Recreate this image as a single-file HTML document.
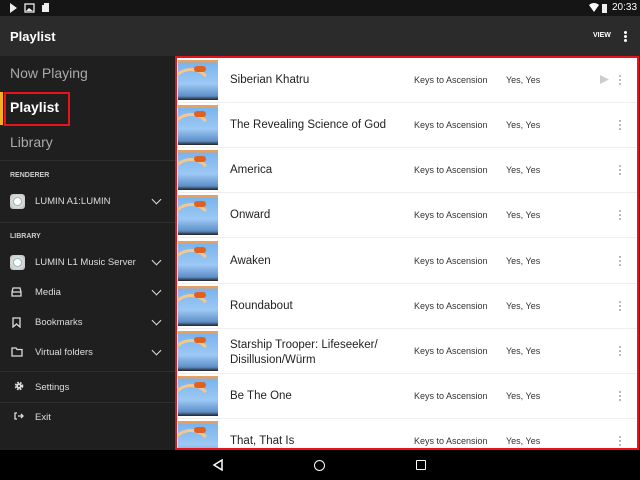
<!DOCTYPE html><html><head><style>
*{margin:0;padding:0;box-sizing:border-box}
body{width:640px;height:480px;overflow:hidden;background:#1f1f1f;font-family:"Liberation Sans",sans-serif;position:relative}
.sb{position:absolute;left:0;top:0;width:640px;height:16px;background:#151515;color:#fff;font-size:10px}
.tb{position:absolute;left:0;top:16px;width:640px;height:40px;background:#2b2b2b;color:#fff}
.side{position:absolute;left:0;top:56px;width:175px;height:394px;background:#1f1f1f}
.a{position:absolute;color:#ddd;font-size:9.5px}
.hdr{position:absolute;left:10px;font-size:7px;color:#ccc;font-weight:bold}
.sep{position:absolute;left:0;width:175px;height:1px;background:#2e2e2e}
.chev{position:absolute;left:153px;width:7px;height:7px;border-right:1.5px solid #ddd;border-bottom:1.5px solid #ddd;transform:rotate(45deg)}
.lum{position:absolute;left:10px;width:15px;height:15px;border-radius:3px;background:radial-gradient(circle,#fff 30%,#6aa 38%,#ddd 45%,#bbb 100%)}
.main{position:absolute;left:175px;top:56px;width:464px;height:394px;border:2px solid #e8141c;background:#fff;overflow:hidden}
.row{position:absolute;left:0;width:460px;height:45px;border-bottom:1px solid #eee}
.th{position:absolute;left:1px;top:2px;width:40px;height:40px;background:linear-gradient(180deg,#e8a060 0,#e8a060 2px,#7ab4ee 3px,#9cc8f4 60%,#5e8fc8 90%,#222 100%);overflow:hidden}
.th:before{content:"";position:absolute;left:-10px;top:8px;width:40px;height:44px;border-radius:50%;border:3px solid #f0c890;border-color:#f0c890 transparent transparent #e8b880}
.th:after{content:"";position:absolute;left:16px;top:6px;width:12px;height:6px;background:#e06020;border-radius:3px}
.t{position:absolute;left:53px;font-size:11.5px;color:#222}
.al{position:absolute;left:237px;font-size:9px;color:#333}
.ar{position:absolute;left:329px;font-size:9px;color:#333}
.dots{position:absolute;left:442px;width:2px;height:2px;background:#bbb;box-shadow:0 -4px #bbb,0 4px #bbb}
.nav{position:absolute;left:0;top:450px;width:640px;height:30px;background:#000}
</style></head><body>
<div class="sb">
<svg style="position:absolute;left:9px;top:3px" width="40" height="10"><path d="M1 0L8 5L1 10Z" fill="#eee"/><rect x="16" y="1" width="9" height="8" fill="none" stroke="#eee" stroke-width="1.3"/><path d="M17 8L20 5L24 8Z" fill="#eee"/><rect x="33" y="2" width="7" height="7" fill="#eee"/><rect x="35" y="0" width="5" height="2" fill="#eee"/></svg>
<svg style="position:absolute;left:589px;top:3px" width="18" height="10"><path d="M0 2Q5 -2 10 2L5 9Z" fill="#fff"/><rect x="13" y="1" width="5" height="9" fill="#eee"/></svg>
<span style="position:absolute;left:612px;top:2px;font-size:10px">20:33</span>
</div>
<div class="tb"><span style="position:absolute;left:10px;top:13px;font-size:13px;font-weight:bold">Playlist</span>
<span style="position:absolute;left:593px;top:16px;font-size:7px;font-weight:bold">VIEW</span>
<div style="position:absolute;left:624px;top:19px;width:3px;height:3px;background:#fff;box-shadow:0 -4px #fff,0 4px #fff;border-radius:50%"></div></div>
<div class="side">
<div style="position:absolute;left:10px;top:9px;font-size:14px;color:#aaa">Now Playing</div>
<div style="position:absolute;left:0;top:36px;width:3px;height:33px;background:#f3b21b"></div>
<div style="position:absolute;left:4px;top:36px;width:66px;height:34px;border:2px solid #e8141c"></div>
<div style="position:absolute;left:10px;top:43px;font-size:14px;color:#fff;font-weight:bold">Playlist</div>
<div style="position:absolute;left:10px;top:78px;font-size:14px;color:#aaa">Library</div>
<div class="sep" style="top:104px"></div>
<div class="hdr" style="top:116px">RENDERER</div>
<div class="lum" style="top:138px"></div><div class="a" style="left:35px;top:140px">LUMIN A1:LUMIN</div><div class="chev" style="top:140px"></div>
<div class="sep" style="top:166px"></div>
<div class="hdr" style="top:177px">LIBRARY</div>
<div class="lum" style="top:199px"></div><div class="a" style="left:35px;top:201px">LUMIN L1 Music Server</div><div class="chev" style="top:201px"></div>
<svg style="position:absolute;left:11px;top:231px" width="11" height="10"><path d="M2 1H9L10 5V9H1V5Z M1 5H10" fill="none" stroke="#ddd" stroke-width="1.3"/></svg>
<div class="a" style="left:35px;top:231px">Media</div><div class="chev" style="top:231px"></div>
<svg style="position:absolute;left:12px;top:261px" width="9" height="11"><path d="M1 1H8V10L4.5 7L1 10Z" fill="none" stroke="#ddd" stroke-width="1.3"/></svg>
<div class="a" style="left:35px;top:261px">Bookmarks</div><div class="chev" style="top:261px"></div>
<svg style="position:absolute;left:11px;top:291px" width="12" height="10"><path d="M1 1H5L6 2.5H11V9H1Z" fill="none" stroke="#ddd" stroke-width="1.3"/></svg>
<div class="a" style="left:35px;top:291px">Virtual folders</div><div class="chev" style="top:291px"></div>
<div class="sep" style="top:315px"></div>
<svg style="position:absolute;left:14px;top:325px" width="10" height="10"><circle cx="5" cy="5" r="3.2" fill="none" stroke="#ddd" stroke-width="2.2" stroke-dasharray="1.6 1"/><circle cx="5" cy="5" r="2.6" fill="#ddd"/><circle cx="5" cy="5" r="1" fill="#1f1f1f"/></svg>
<div class="a" style="left:35px;top:326px">Settings</div>
<div class="sep" style="top:346px"></div>
<svg style="position:absolute;left:14px;top:356px" width="10" height="8"><path d="M3 1H1V7H3 M4 4H9 M7 2L9 4L7 6" fill="none" stroke="#ddd" stroke-width="1.3"/></svg>
<div class="a" style="left:35px;top:356px">Exit</div>
</div>
<div class="main">
<div class="row" style="top:0"><div class="th"></div><div class="t" style="top:16px">Siberian Khatru</div><div class="al" style="top:17px">Keys to Ascension</div><div class="ar" style="top:17px">Yes, Yes</div><svg style="position:absolute;left:423px;top:17px" width="9" height="9"><path d="M0 0L9 4.5L0 9Z" fill="#ccc"/></svg><div class="dots" style="top:21px"></div></div>
<div class="row" style="top:45px"><div class="th"></div><div class="t" style="top:16px">The Revealing Science of God</div><div class="al" style="top:17px">Keys to Ascension</div><div class="ar" style="top:17px">Yes, Yes</div><div class="dots" style="top:21px"></div></div>
<div class="row" style="top:90px"><div class="th"></div><div class="t" style="top:16px">America</div><div class="al" style="top:17px">Keys to Ascension</div><div class="ar" style="top:17px">Yes, Yes</div><div class="dots" style="top:21px"></div></div>
<div class="row" style="top:135px"><div class="th"></div><div class="t" style="top:16px">Onward</div><div class="al" style="top:17px">Keys to Ascension</div><div class="ar" style="top:17px">Yes, Yes</div><div class="dots" style="top:21px"></div></div>
<div class="row" style="top:181px"><div class="th"></div><div class="t" style="top:16px">Awaken</div><div class="al" style="top:17px">Keys to Ascension</div><div class="ar" style="top:17px">Yes, Yes</div><div class="dots" style="top:21px"></div></div>
<div class="row" style="top:226px"><div class="th"></div><div class="t" style="top:16px">Roundabout</div><div class="al" style="top:17px">Keys to Ascension</div><div class="ar" style="top:17px">Yes, Yes</div><div class="dots" style="top:21px"></div></div>
<div class="row" style="top:271px"><div class="th"></div><div class="t" style="top:9px;line-height:15px">Starship Trooper: Lifeseeker/<br>Disillusion/Würm</div><div class="al" style="top:17px">Keys to Ascension</div><div class="ar" style="top:17px">Yes, Yes</div><div class="dots" style="top:21px"></div></div>
<div class="row" style="top:316px"><div class="th"></div><div class="t" style="top:16px">Be The One</div><div class="al" style="top:17px">Keys to Ascension</div><div class="ar" style="top:17px">Yes, Yes</div><div class="dots" style="top:21px"></div></div>
<div class="row" style="top:361px"><div class="th"></div><div class="t" style="top:16px">That, That Is</div><div class="al" style="top:17px">Keys to Ascension</div><div class="ar" style="top:17px">Yes, Yes</div><div class="dots" style="top:21px"></div></div>
</div>
<div class="nav">
<svg style="position:absolute;left:212px;top:9px" width="12" height="12"><path d="M10 1L2 6L10 11Z" fill="none" stroke="#fff" stroke-width="1.5"/></svg>
<div style="position:absolute;left:314px;top:10px;width:11px;height:11px;border:1.5px solid #fff;border-radius:50%"></div>
<div style="position:absolute;left:416px;top:10px;width:10px;height:10px;border:1.5px solid #fff;border-radius:1px"></div>
</div>
</body></html>
